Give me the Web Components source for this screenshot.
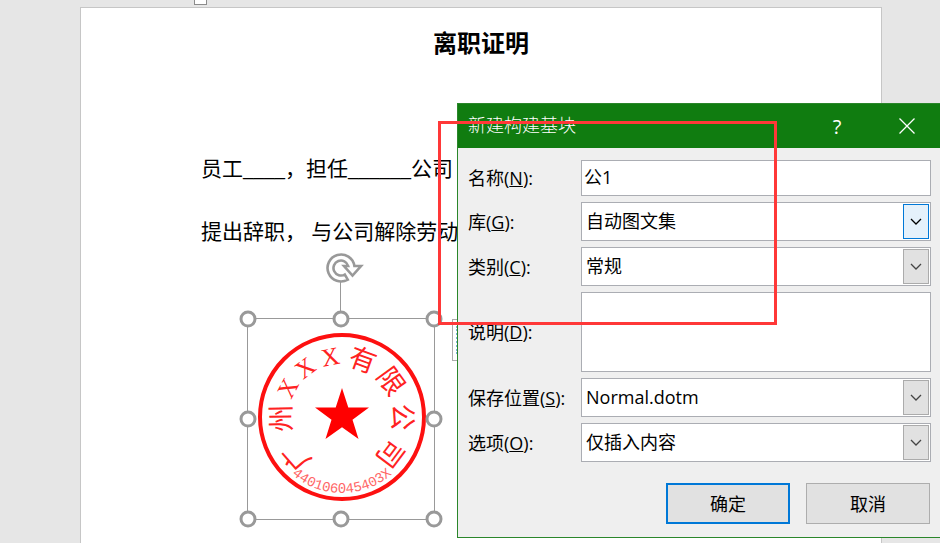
<!DOCTYPE html>
<html lang="zh-CN">
<head>
<meta charset="utf-8">
<title>离职证明</title>
<style>
html, body { height: 100%; }
body {
  margin: 0;
  overflow: hidden;
  background: #e6e6e6;
  color: #000;
  font-family: "Open Sans", "Noto Sans CJK SC", sans-serif;
  font-size: 18px;
}
</style>
</head>
<body>

<word-workspace>
  <document-page heading="离职证明">
    <p>员工____，担任______公司</p>
    <p>提出辞职， 与公司解除劳动</p>
    <picture-selection slot="picture">
      <company-seal code="440106045403X"></company-seal>
    </picture-selection>
  </document-page>

  <dialog-window slot="window" heading="新建构建基块">
    <text-row value="公1">名称(<u>N</u>):</text-row>
    <select-row value="自动图文集" active>库(<u>G</u>):</select-row>
    <select-row value="常规">类别(<u>C</u>):</select-row>
    <area-row>说明(<u>D</u>):</area-row>
    <select-row value="Normal.dotm">保存位置(<u>S</u>):</select-row>
    <select-row value="仅插入内容">选项(<u>O</u>):</select-row>
    <push-button slot="actions" primary>确定</push-button>
    <push-button slot="actions">取消</push-button>
  </dialog-window>

  <highlight-frame slot="window"></highlight-frame>
</word-workspace>

<script>
// small helper: open shadow root filled with a template
function attach(el, html) {
  const template = document.createElement("template");
  template.innerHTML = html;
  el.attachShadow({ mode: "open" }).appendChild(template.content.cloneNode(true));
}

// ---------- workspace: grey desk, tab marker, page and floating windows ----------
class WordWorkspace extends HTMLElement {
  constructor() {
    super();
    attach(this, `
      <style>
        :host { display: flex; flex-direction: column; position: relative; height: 100%; overflow: hidden; }
        .ruler { height: 7px; flex: none; padding-left: 194px; }
        .marker { width: 11px; height: 4px; border: 1px solid #8c8c8c; border-top: 0; background: #fff; }
      </style>
      <div class="ruler"><div class="marker"></div></div>
      <slot></slot>
      <slot name="window"></slot>
    `);
  }
}
customElements.define("word-workspace", WordWorkspace);

// ---------- sheet of paper ----------
class DocumentPage extends HTMLElement {
  constructor() {
    super();
    attach(this, `
      <style>
        :host {
          display: block; flex: 1; margin: 0 58px 0 80px; padding: 18px 120px 0;
          background: #fff; border: 1px solid #c6c6c6; border-bottom: 0;
          font-family: "Liberation Serif", "Noto Sans CJK SC", sans-serif;
        }
        h1 { margin: 0 0 76px; font-size: 24px; line-height: 36px; text-align: center; font-weight: bold; }
        ::slotted(p) { margin: 0; font-size: 21px; line-height: 63px; white-space: nowrap; }
        .picture { margin: 54px 0 0 46px; }
      </style>
      <h1></h1>
      <slot></slot>
      <div class="picture"><slot name="picture"></slot></div>
    `);
  }
  connectedCallback() {
    this.shadowRoot.querySelector("h1").textContent = this.getAttribute("heading");
  }
}
customElements.define("document-page", DocumentPage);

// ---------- selection box with resize handles and the rotate handle ----------
class PictureSelection extends HTMLElement {
  constructor() {
    super();
    attach(this, `
      <style>
        :host { display: block; position: relative; width: 186px; height: 200px; border: 1px solid #999; }
        i {
          position: absolute; box-sizing: border-box; width: 17px; height: 17px;
          border: 3px solid #999; border-radius: 50%; background: #fff;
          transform: translate(-50%, -50%);
        }
        .rotate { position: absolute; left: 50%; top: -68px; margin-left: -18px; }
        .layout {
          position: absolute; left: 204px; top: 0; width: 40px; height: 42px; padding: 0;
          border: 1px solid #ababab; background: #fff;
        }
        .layout::before {
          content: ""; position: absolute; left: 3px; top: 6px; bottom: 6px;
          border-left: 2px dotted #7bb3d6;
        }
      </style>
      <slot></slot>
      <svg class="rotate" width="44" height="68" viewBox="0 0 44 68" fill="none">
        <path d="M17.500 30V68" stroke="#999"/>
        <path d="M31.400 15A13.500 13.500 0 1 0 24.800 28.700L21.800 23.500A7.500 7.500 0 1 1 25.200 15H21L29.500 24.500L38 15z"
          fill="#fff" stroke="#999" stroke-width="2.600"/>
      </svg>
      <button class="layout" aria-label="布局选项"></button>
    `);
    for (const [x, y] of [[0, 0], [50, 0], [100, 0], [0, 50], [100, 50], [0, 100], [50, 100], [100, 100]]) {
      const handle = document.createElement("i");
      handle.style.left = x + "%";
      handle.style.top = y + "%";
      this.shadowRoot.appendChild(handle);
    }
  }
}
customElements.define("picture-selection", PictureSelection);

// ---------- round red seal ----------
class CompanySeal extends HTMLElement {
  constructor() {
    super();
    attach(this, `
      <style>
        :host { display: block; }
        svg { display: block; width: 100%; height: 200px; }
        text { text-anchor: middle; fill: #f22; }
        .name text { font: 27px "Noto Sans CJK SC", sans-serif; }
        .name .latin { font: 25px "Liberation Serif", serif; }
        .code { font: 14px "Liberation Mono", monospace; fill: #f66; }
      </style>
      <svg viewBox="-94 -98 186 200">
        <circle r="82" fill="none" stroke="#fd1010" stroke-width="4"/>
        <path d="M0-29L6.300-9.500H27L10.500 2.800 16.500 22 0 10.300-16.500 22-10.500 2.800-27-9.500H-6.300z" fill="#f00"/>
        <g class="name"></g>
        <path id="arc" d="M-76 0A76 76 0 0 0 76 0" fill="none"/>
        <text class="code"><textPath href="#arc" startOffset="50%"></textPath></text>
      </svg>
    `);
  }
  connectedCallback() {
    // each letter stands on the ring at its own angle, clockwise from the top
    const letters = [["广", -131], ["州", -91], ["X", -62], ["X", -37], ["X", -11], ["有", 20], ["限", 54], ["公", 90], ["司", 127]];
    const name = this.shadowRoot.querySelector(".name");
    for (const [letter, angle] of letters) {
      const text = document.createElementNS("http://www.w3.org/2000/svg", "text");
      text.textContent = letter;
      text.setAttribute("y", letter === "X" ? -53 : -51);
      text.setAttribute("transform", `rotate(${angle})`);
      if (letter === "X") text.setAttribute("class", "latin");
      name.appendChild(text);
    }
    this.shadowRoot.querySelector("textPath").textContent = this.getAttribute("code");
  }
}
customElements.define("company-seal", CompanySeal);

// ---------- dialog ----------
class DialogWindow extends HTMLElement {
  constructor() {
    super();
    attach(this, `
      <style>
        :host {
          display: block; position: absolute; left: 457px; right: 0; top: 103px;
          border: 1px solid #2a862a; border-right: 0; background: #efefef;
        }
        header { display: flex; align-items: center; gap: 4px; height: 44px; padding-left: 10px; background: #107c10; color: #fff; }
        h2 { flex: 1; margin: 0; font-size: 18px; line-height: 24px; padding-bottom: 2px; font-weight: 300; }
        header button {
          display: grid; place-items: center; width: 66px; height: 44px; padding: 0;
          border: 0; background: none; color: #fff; font: 20px "Open Sans", sans-serif;
        }
        .rows { display: flex; flex-direction: column; gap: 6px; padding: 12px 9px 0 10px; }
        footer { display: flex; justify-content: flex-end; gap: 16px; padding: 21px 10px 13px; }
      </style>
      <header>
        <h2></h2>
        <button aria-label="帮助">?</button>
        <button aria-label="关闭">
          <svg width="16" height="16" viewBox="0 0 16 16" stroke="#fff" stroke-width="1.300"><path d="M.5.5l15 15M15.500.5l-15 15"/></svg>
        </button>
      </header>
      <div class="rows"><slot></slot></div>
      <footer><slot name="actions"></slot></footer>
    `);
  }
  connectedCallback() {
    this.shadowRoot.querySelector("h2").textContent = this.getAttribute("heading");
  }
}
customElements.define("dialog-window", DialogWindow);

// styles that every form row shares
const rowStyle = `
  :host { display: flex; align-items: center; }
  label { flex: none; width: 113px; white-space: nowrap; line-height: 24px; }
  .field {
    flex: 1; min-width: 0; box-sizing: border-box; margin: 0; border: 1px solid #abadb3; border-radius: 0;
    background: #fff; color: #000; font: inherit; outline: 0;
  }
`;

class TextRow extends HTMLElement {
  constructor() {
    super();
    attach(this, `
      <style>${rowStyle} input { height: 36px; padding: 0 2px 4px; }</style>
      <label for="field"><slot></slot></label>
      <input class="field" id="field" type="text">
    `);
  }
  connectedCallback() {
    this.shadowRoot.querySelector("input").value = this.getAttribute("value");
  }
}
customElements.define("text-row", TextRow);

class AreaRow extends HTMLElement {
  constructor() {
    super();
    attach(this, `
      <style>${rowStyle} textarea { height: 80px; padding: 3px; resize: none; }</style>
      <label for="field"><slot></slot></label>
      <textarea class="field" id="field"></textarea>
    `);
  }
}
customElements.define("area-row", AreaRow);

class SelectRow extends HTMLElement {
  constructor() {
    super();
    attach(this, `
      <style>
        ${rowStyle}
        .box { flex: 1; display: grid; grid-template-columns: 1fr 28px; align-items: center; height: 39px; }
        select { grid-area: 1 / 1 / 2 / 3; height: 39px; padding: 0 30px 2px 4px; appearance: none; }
        .arrow {
          grid-area: 1 / 2; box-sizing: border-box; display: grid; place-items: center;
          width: 26px; height: 35px; border: 1px solid #ababab; background: #e1e1e1;
          color: #444; pointer-events: none; z-index: 1;
        }
        :host([active]) .arrow { border-color: #0078d7; background: #e5f1fb; color: #000; }
      </style>
      <label for="field"><slot></slot></label>
      <div class="box">
        <select class="field" id="field"><option></option></select>
        <span class="arrow">
          <svg width="12" height="8" viewBox="0 0 12 8" fill="none" stroke="currentColor" stroke-width="1.300"><path d="M1 1l5 5 5-5"/></svg>
        </span>
      </div>
    `);
  }
  connectedCallback() {
    this.shadowRoot.querySelector("option").textContent = this.getAttribute("value");
  }
}
customElements.define("select-row", SelectRow);

class PushButton extends HTMLElement {
  constructor() {
    super();
    attach(this, `
      <style>
        :host { display: block; }
        button {
          display: block; box-sizing: border-box; width: 124px; height: 41px; padding: 0 0 2px;
          border: 1px solid #adadad; background: #e1e1e1; color: #000; font: inherit;
        }
        :host([primary]) button { border: 2px solid #0078d7; }
      </style>
      <button type="button"><slot></slot></button>
    `);
  }
}
customElements.define("push-button", PushButton);

// ---------- red marking over the first fields ----------
class HighlightFrame extends HTMLElement {
  constructor() {
    super();
    attach(this, `
      <style>
        :host {
          display: block; position: absolute; left: 438px; top: 121px; box-sizing: border-box;
          width: 339px; height: 204px; border: 3px solid #ff3838; pointer-events: none;
        }
      </style>
    `);
  }
}
customElements.define("highlight-frame", HighlightFrame);
</script>
</body>
</html>
